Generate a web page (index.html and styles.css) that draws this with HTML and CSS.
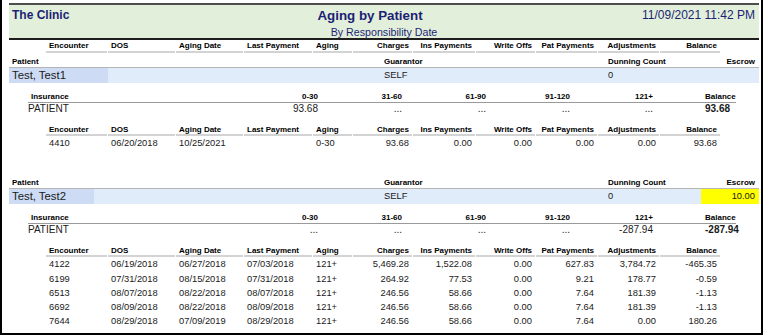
FILE: index.html
```html
<!DOCTYPE html>
<html lang="en">
<head>
    <meta charset="UTF-8">
    <title>Aging by Patient</title>
    <link rel="stylesheet" href="styles.css">
</head>
<body>
    <div class="report">
        <header class="report-head">
            <div class="clinic">The Clinic</div>
            <div class="title-box">
                <div class="title">Aging by Patient</div>
                <div class="subtitle">By Responsibility Date</div>
            </div>
            <div class="stamp">11/09/2021 11:42 PM</div>
        </header>

        <div class="enc-grid enc-head page-cols">
            <span>Encounter</span><span>DOS</span><span>Aging Date</span><span>Last Payment</span><span>Aging</span>
            <span class="num">Charges</span><span class="num">Ins Payments</span><span class="num">Write Offs</span>
            <span class="num">Pat Payments</span><span class="num">Adjustments</span><span class="num">Balance</span>
        </div>

        <!-- patient 1 -->
        <section class="patient">
            <div class="pt-grid pt-labels">
                <span>Patient</span><span>Guarantor</span><span>Dunning Count</span><span class="num">Escrow</span>
            </div>
            <div class="pt-grid pt-row">
                <span class="pt-name"><span class="name-box">Test, Test1</span></span>
                <span>SELF</span><span>0</span><span class="num"></span>
            </div>

            <div class="ins-grid ins-head">
                <span>Insurance</span><span class="num">0-30</span><span class="num">31-60</span><span class="num">61-90</span>
                <span class="num">91-120</span><span class="num">121+</span><span></span><span>Balance</span>
            </div>
            <div class="ins-grid ins-row">
                <span class="ins-name">PATIENT</span><span class="num">93.68</span><span class="num">...</span><span class="num">...</span>
                <span class="num">...</span><span class="num">...</span><span></span><span class="total">93.68</span>
            </div>

            <div class="enc-grid enc-head">
                <span>Encounter</span><span>DOS</span><span>Aging Date</span><span>Last Payment</span><span>Aging</span>
                <span class="num">Charges</span><span class="num">Ins Payments</span><span class="num">Write Offs</span>
                <span class="num">Pat Payments</span><span class="num">Adjustments</span><span class="num">Balance</span>
            </div>
            <div class="enc-grid enc-row">
                <span>4410</span><span>06/20/2018</span><span>10/25/2021</span><span></span><span>0-30</span>
                <span class="num">93.68</span><span class="num">0.00</span><span class="num">0.00</span>
                <span class="num">0.00</span><span class="num">0.00</span><span class="num">93.68</span>
            </div>
        </section>

        <!-- patient 2 -->
        <section class="patient">
            <div class="pt-grid pt-labels">
                <span>Patient</span><span>Guarantor</span><span>Dunning Count</span><span class="num">Escrow</span>
            </div>
            <div class="pt-grid pt-row">
                <span class="pt-name"><span class="name-box short">Test, Test2</span></span>
                <span>SELF</span><span>0</span><span class="num escrow-flag">10.00</span>
            </div>

            <div class="ins-grid ins-head">
                <span>Insurance</span><span class="num">0-30</span><span class="num">31-60</span><span class="num">61-90</span>
                <span class="num">91-120</span><span class="num">121+</span><span></span><span>Balance</span>
            </div>
            <div class="ins-grid ins-row">
                <span class="ins-name">PATIENT</span><span class="num">...</span><span class="num">...</span><span class="num">...</span>
                <span class="num">...</span><span class="num">-287.94</span><span></span><span class="total">-287.94</span>
            </div>

            <div class="enc-grid enc-head">
                <span>Encounter</span><span>DOS</span><span>Aging Date</span><span>Last Payment</span><span>Aging</span>
                <span class="num">Charges</span><span class="num">Ins Payments</span><span class="num">Write Offs</span>
                <span class="num">Pat Payments</span><span class="num">Adjustments</span><span class="num">Balance</span>
            </div>
            <div class="enc-grid enc-row">
                <span>4122</span><span>06/19/2018</span><span>06/27/2018</span><span>07/03/2018</span><span>121+</span>
                <span class="num">5,469.28</span><span class="num">1,522.08</span><span class="num">0.00</span>
                <span class="num">627.83</span><span class="num">3,784.72</span><span class="num">-465.35</span>
            </div>
            <div class="enc-grid enc-row">
                <span>6199</span><span>07/31/2018</span><span>08/15/2018</span><span>07/31/2018</span><span>121+</span>
                <span class="num">264.92</span><span class="num">77.53</span><span class="num">0.00</span>
                <span class="num">9.21</span><span class="num">178.77</span><span class="num">-0.59</span>
            </div>
            <div class="enc-grid enc-row">
                <span>6513</span><span>08/07/2018</span><span>08/22/2018</span><span>08/07/2018</span><span>121+</span>
                <span class="num">246.56</span><span class="num">58.66</span><span class="num">0.00</span>
                <span class="num">7.64</span><span class="num">181.39</span><span class="num">-1.13</span>
            </div>
            <div class="enc-grid enc-row">
                <span>6692</span><span>08/09/2018</span><span>08/22/2018</span><span>08/09/2018</span><span>121+</span>
                <span class="num">246.56</span><span class="num">58.66</span><span class="num">0.00</span>
                <span class="num">7.64</span><span class="num">181.39</span><span class="num">-1.13</span>
            </div>
            <div class="enc-grid enc-row">
                <span>7644</span><span>08/29/2018</span><span>07/09/2019</span><span>08/29/2018</span><span>121+</span>
                <span class="num">246.56</span><span class="num">58.66</span><span class="num">0.00</span>
                <span class="num">7.64</span><span class="num">0.00</span><span class="num">180.26</span>
            </div>
        </section>
    </div>
</body>
</html>
```

FILE: styles.css
```css
body {
    margin: 0;
    font-family: "Liberation Sans", Arial, sans-serif;
    color: #1a1a1a;
    background: #fff;
}

.report {
    width: 759px;
    height: 333px;
    border: 2px solid #000;
    border-top: none;
    overflow: hidden;
}

/* report title band */
.report-head {
    display: grid;
    grid-template-columns: 1fr auto 1fr;
    width: 750px;
    height: 33px;
    margin: 3px 0 0 7px;
    background-color: #e2efda;
    border-top: 2px solid #4d4d4d;
    border-bottom: 2px solid #1e1e1e;
    color: #1c1f75;
}

.clinic {
    font-size: 12px;
    font-weight: bold;
    line-height: 14px;
    padding: 3px 0 0 3px;
}

.title-box {
    padding-top: 3px;
}

.title {
    font-size: 13.33px;
    font-weight: bold;
    line-height: 16px;
    margin-right: 28px;
    text-align: center;
}

.subtitle {
    font-size: 10.67px;
    line-height: 12px;
    margin-top: 2px;
    text-align: center;
}

.stamp {
    font-size: 12px;
    line-height: 14px;
    padding: 3px 4px 0 0;
    text-align: right;
}

.num {
    text-align: right;
}

/* encounter columns */
.enc-grid {
    display: grid;
    grid-template-columns: 61px 67px 67px 68px 39px 59px 62px 59px 61px 61px 60px;
    column-gap: 1px;
    margin-left: 44px;
}

.enc-grid span {
    padding: 0 3px;
    white-space: nowrap;
}

.enc-head {
    font-size: 8px;
    font-weight: bold;
    line-height: 9px;
    color: #000;
    margin-top: 10px;
}

.enc-head span {
    border-bottom: 2px solid #d3d3d3;
}

.page-cols {
    margin-top: 1px;
    line-height: 10px;
}

.enc-row {
    font-size: 9.33px;
    line-height: 14.25px;
}

/* patient block */
.patient {
    margin-top: 4px;
}

.patient + .patient {
    margin-top: 28px;
}

.pt-grid {
    display: grid;
    grid-template-columns: 372px 224px 96px 58px;
    width: 750px;
    margin-left: 7px;
}

.pt-grid span {
    padding: 0 3px;
    white-space: nowrap;
}

.pt-grid .num {
    padding-right: 4px;
}

.pt-labels {
    font-size: 8px;
    font-weight: bold;
    line-height: 10px;
    color: #000;
    border-bottom: 1px solid #b5b5b5;
}

.pt-row {
    height: 15px;
    font-size: 9.33px;
    line-height: 15px;
    background-color: #e1ecfa;
}

.pt-grid .pt-name {
    padding: 0;
}

.name-box {
    display: block;
    width: 93px;
    padding-left: 3px;
    font-size: 11.33px;
    background-color: #cddcf4;
}

.name-box.short {
    width: 79px;
}

.pt-grid .escrow-flag {
    background-color: #ffff00;
}

/* insurance buckets */
.ins-grid {
    display: grid;
    grid-template-columns: 209px 83px 84px 84px 84px 83px 48px 33px;
    width: 708px;
    margin-left: 26px;
}

.ins-grid span {
    padding: 0 2px;
    white-space: nowrap;
}

.ins-head {
    margin-top: 9px;
    font-size: 8px;
    font-weight: bold;
    line-height: 10px;
    color: #000;
    border-bottom: 1px solid #9a9a9a;
}

.ins-head span:first-child {
    padding-left: 3px;
}

.ins-row {
    font-size: 10px;
    line-height: 12px;
}

.ins-grid .ins-name {
    padding-left: 0;
}

.ins-row .total {
    font-weight: bold;
}
```
